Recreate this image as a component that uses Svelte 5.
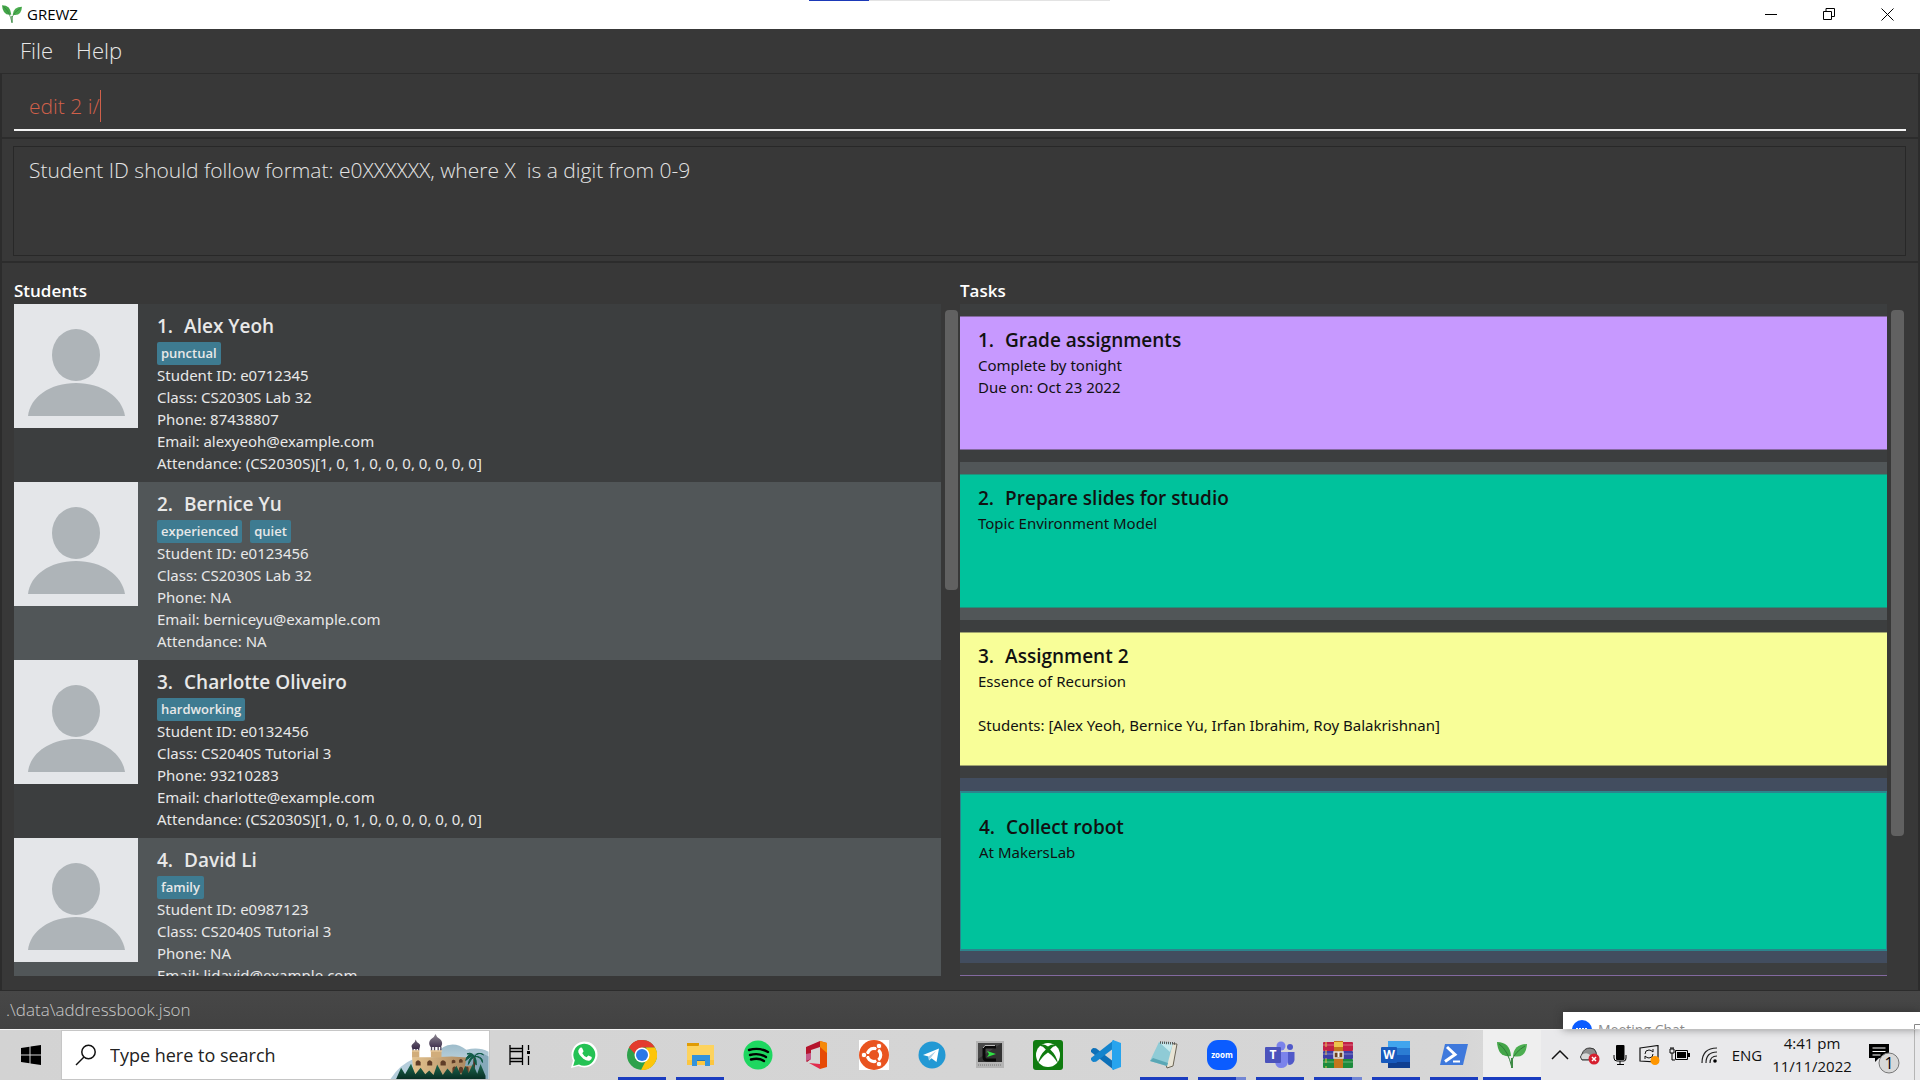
<script>
  const students = [
    { name: 'Alex Yeoh', tags: ['punctual'], lines: ['Student ID: e0712345', 'Class: CS2030S Lab 32', 'Phone: 87438807', 'Email: alexyeoh@example.com', 'Attendance: (CS2030S)[1, 0, 1, 0, 0, 0, 0, 0, 0, 0]'] },
    { name: 'Bernice Yu', tags: ['experienced', 'quiet'], lines: ['Student ID: e0123456', 'Class: CS2030S Lab 32', 'Phone: NA', 'Email: berniceyu@example.com', 'Attendance: NA'] },
    { name: 'Charlotte Oliveiro', tags: ['hardworking'], lines: ['Student ID: e0132456', 'Class: CS2040S Tutorial 3', 'Phone: 93210283', 'Email: charlotte@example.com', 'Attendance: (CS2030S)[1, 0, 1, 0, 0, 0, 0, 0, 0, 0]'] },
    { name: 'David Li', tags: ['family'], lines: ['Student ID: e0987123', 'Class: CS2040S Tutorial 3', 'Phone: NA', 'Email: lidavid@example.com'] }
  ];
  const tasks = [
    { name: 'Grade assignments', kind: 'deadline', lines: ['Complete by tonight', 'Due on: Oct 23 2022'] },
    { name: 'Prepare slides for studio', kind: 'todo', lines: ['Topic Environment Model'] },
    { name: 'Assignment 2', kind: 'assignment', lines: ['Essence of Recursion', '', 'Students: [Alex Yeoh, Bernice Yu, Irfan Ibrahim, Roy Balakrishnan]'] },
    { name: 'Collect robot', kind: 'todo', selected: true, lines: ['At MakersLab'] }
  ];
  const apps = [
    { id: 'WhatsApp' }, { id: 'Chrome', open: true }, { id: 'File Explorer', open: true }, { id: 'Spotify' },
    { id: 'Office' }, { id: 'Ubuntu' }, { id: 'Telegram' }, { id: 'Cmder' }, { id: 'Xbox' }, { id: 'VS Code' },
    { id: 'Notepad', open: true }, { id: 'Zoom', open: true, multi: true }, { id: 'Teams', open: true },
    { id: 'WinRAR', open: true, multi: true }, { id: 'Word', open: true }, { id: 'PowerShell', open: true },
    { id: 'GREWZ', open: true, active: true }
  ];
  let command = $state('edit 2 i/');
  const message = 'Student ID should follow format: e0XXXXXX, where X  is a digit from 0-9';
</script>

{#snippet plant()}
  <path d="M0 2q13 0 14 14q-13 2-14-14z" fill="#43a548" />
  <path d="M30 4q-13 0-14 12q13 3 14-12z" fill="#4cae50" />
  <path d="M2 4q9 6 13 24M28 6q-10 6-13 14" fill="none" stroke="#2f7d3a" stroke-width="1" />
  <path d="M15 18v10" stroke="#3f8c46" stroke-width="2" />
{/snippet}

<div class="screen">
  <div class="share-strip"><span></span></div>
  <header class="titlebar">
    <svg width="20" height="20" viewBox="0 0 30 30" aria-hidden="true">{@render plant()}</svg>
    <h1>GREWZ</h1>
    <div class="window-buttons">
      <button aria-label="Minimise"><svg width="12" height="12"><path d="M0 6.5h12" stroke="#000" /></svg></button>
      <button aria-label="Restore"><svg width="12" height="12"><path d="M.5 3.5h8v8h-8zM3 3V.5h8.500v8H9" fill="none" stroke="#000" /></svg></button>
      <button aria-label="Close"><svg width="13" height="13"><path d="M.5.5l12 12M12.500.5l-12 12" stroke="#000" /></svg></button>
    </div>
  </header>

  <nav class="menu"><button>File</button><button>Help</button></nav>

  <section class="command">
    <label class="field"><input aria-label="Command" bind:value={command} spellcheck="false" /><span class="caret"></span></label>
  </section>
  <section class="result">
    <textarea readonly aria-label="Result" spellcheck="false">{message}</textarea>
  </section>

  <main>
    <section class="panel">
      <h2>Students</h2>
      <div class="scroller">
        <ul>
          {#each students as s, i}
            <li class="student">
              <svg class="avatar" width="124" height="124" viewBox="0 0 124 124" aria-hidden="true">
                <rect width="124" height="124" fill="#e4e6e9" />
                <ellipse cx="62" cy="51" rx="24" ry="26" fill="#aeb4b8" />
                <path d="M14 112C16 93 36 79 62 79s46 14 49 33z" fill="#aeb4b8" />
              </svg>
              <div class="details">
                <h3><span>{i + 1}.</span>{s.name}</h3>
                <div class="tags">{#each s.tags as t}<span>{t}</span>{/each}</div>
                {#each s.lines as l}<p>{l}</p>{/each}
              </div>
            </li>
          {/each}
        </ul>
        <div class="track"><div class="thumb short"></div></div>
      </div>
    </section>
    <section class="panel">
      <h2>Tasks</h2>
      <div class="scroller">
        <ul>
          {#each tasks as t, i}
            <li class="task" class:selected={t.selected}>
              <div class="card {t.kind}">
                <h3><span>{i + 1}.</span>{t.name}</h3>
                {#each t.lines as l}<p>{l}</p>{/each}
              </div>
            </li>
          {/each}
          <li class="task"><div class="card deadline"></div></li>
        </ul>
        <div class="track"><div class="thumb tall"></div></div>
      </div>
    </section>
  </main>

  <footer class="status">.\data\addressbook.json
    <div class="chat">
      <svg width="20" height="20" viewBox="0 0 20 20" aria-hidden="true"><circle cx="10" cy="10" r="10" fill="#0b5cff" /><path d="M4 9h12" stroke="#fff" stroke-width="2" stroke-dasharray="2 1" /></svg>
      <span>Meeting Chat</span>
      <svg class="chat-min" width="12" height="10" aria-hidden="true"><path d="M0 9.500h12" stroke="#888" /></svg>
      <svg width="6" height="18" aria-hidden="true"><path d="M6 4.500H.5V18" fill="none" stroke="#888" /></svg>
    </div>
  </footer>

  <div class="taskbar">
    <button class="start" aria-label="Start"><svg width="20" height="20" viewBox="0 0 20 20"><path d="M0 3l8.500-1.200V9.500H0zM9.500 1.600L20 0v9.500H9.500zM0 10.500h8.500v7.700L0 17zM9.500 10.500H20V20L9.500 18.400z" /></svg></button>
    <div class="search">
      <svg width="22" height="22" viewBox="0 0 22 22" aria-hidden="true"><circle cx="13.500" cy="8" r="6.700" fill="none" stroke="#111" stroke-width="1.500" /><path d="M9 13L1 21" stroke="#111" stroke-width="1.500" /></svg>
      <input placeholder="Type here to search" aria-label="Type here to search" />
      <svg width="99" height="48" viewBox="33 33 296 145" aria-hidden="true">
        <defs>
          <linearGradient id="sand" x2="1"><stop stop-color="#e3c28e" /><stop offset="1" stop-color="#a5825c" /></linearGradient>
          <linearGradient id="dome" y2="1" x2="0"><stop stop-color="#8d8791" /><stop offset="1" stop-color="#3a2b4a" /></linearGradient>
          <linearGradient id="hill" y2="1" x2="0"><stop stop-color="#9dbccb" /><stop offset="1" stop-color="#dce9ef" /></linearGradient>
          <linearGradient id="tree" y2="1" x2="0"><stop stop-color="#1d6a50" /><stop offset="1" stop-color="#06281f" /></linearGradient>
        </defs>
        <path d="M160 110Q210 50 262 90Q300 80 329 96V178H160z" fill="url(#hill)" />
        <path d="M240 130Q290 82 329 110V178H240z" fill="#86a9ba" />
        <path d="M33 178Q60 134 106 116V178z" fill="#b5cddb" />
        <path d="M98 112h60l60-2 45 3-5 26 27-2v41H104z" fill="url(#sand)" />
        <path d="M98 91h22v22H98zM155 91h32v22h-32z" fill="#d1ad7b" />
        <path d="M98 91h22v4H98zM153 91h36v4h-36z" fill="#efd4a6" />
        <path d="M101 81v10M110 81v10M118 81v10M157 80v11M166 80v11M177 80v11M185 80v11" stroke="#554a61" stroke-width="4" />
        <path d="M109 59q2 9 10 12q7 5 0 16h-19q-7-9 0-15q8-4 9-13zM169 42q3 11 14 16q11 11 2 23h-31q-9-12 1-23q11-6 14-16z" fill="url(#dome)" />
        <path d="M109 137v-10q7-12 15 0v10zM144 137v-10q7-12 15 0v10zM184 137v-10q7-12 16 0v10zM218 131v-8q5-7 11 0v6zM240 129v-8q5-7 11 0v7zM220 161v-16q6-9 13 0v14zM240 160v-15q5-8 12 0v14zM259 159v-15q5-8 10 0v14z" fill="#5e3c27" />
        <path d="M284 156l3-44" stroke="#4d3424" stroke-width="6" />
        <path d="M286 110q-20-14-26 12q14-14 26-12q-16 2-18 24q9-17 18-24q-2 14 6 26q2-16-6-26q18-2 25 18q1-20-25-18q10-16 28-5q-12-11-28 5q-6-14-22-8q14 0 22 8z" fill="#0f5a46" stroke="#0f5a46" stroke-width="3" />
        <path d="M50 178l15-34 12 20 18-32 13 32 16-20 14 20 12-12 13 14 11-32 17 32 14-20 14 16 13-24 14 28 13-28 10 22 13-28 13 30 10-29 15 35v15z" fill="url(#tree)" />
      </svg>
    </div>
    <button class="tile view" aria-label="Task View"><svg width="22" height="20" viewBox="0 0 22 20"><path d="M1 0v3.500h12.500V0M1 20v-3.500h12.500V20M1 6.500h12.500v7H1zM1 3v14M13.500 3v14M19.500 0v5M19.500 11v9" fill="none" stroke="#000" stroke-width="1.300" /><path d="M18 6h3v3h-3z" /></svg></button>
    <div class="apps">
      {#each apps as a}
        <button class="tile" class:open={a.open} class:multi={a.multi} class:active={a.active} aria-label={a.id}>
          <svg width="30" height="30" viewBox="0 0 30 30">
            {#if a.id === 'WhatsApp'}
              <path d="M2 28l2-7.500A13 13 0 1 1 9.500 26z" fill="#fff" />
              <path d="M4.200 26l1.600-5.700A11 11 0 1 1 10 24.400z" fill="#24c254" />
              <path d="M10.500 8.500q1-1.500 2.500-.8l1.600 3.600-1.300 2q1.500 3 4.300 4l1.700-1.900 3.500 1.700q.4 2.400-2 3.400-2.600 1-6.500-1.700-4.200-3.300-5-6.500-.4-2.200 1.200-3.800z" fill="#fff" />
            {:else if a.id === 'Chrome'}
              <circle cx="15" cy="15" r="15" fill="#2da14b" />
              <path d="M2 7.500A15 15 0 0 1 28 7.500H15z" fill="#e33b2e" />
              <path d="M2 7.500A15 15 0 0 1 15 0v15H9z" fill="#e33b2e" />
              <path d="M28 7.500A15 15 0 0 1 14 30l7.500-14.500L19 7.500z" fill="#fdc50a" />
              <circle cx="15" cy="15" r="7.500" fill="#fff" /><circle cx="15" cy="15" r="6" fill="#2a78e8" />
            {:else if a.id === 'File Explorer'}
              <path d="M2 3h12v6H2z" fill="#e09b04" /><path d="M2 6h11l2-1h14v20H2z" fill="#fdd35e" /><path d="M2 20h27v5H2z" fill="#fcc63f" />
              <path d="M7 15h18v11h-5v-6h-8v6H7z" fill="#3393dc" /><path d="M12 20h8v1h-8z" fill="#2574b5" />
            {:else if a.id === 'Spotify'}
              <circle cx="15" cy="15" r="14.500" fill="#1ed760" />
              <path d="M6 10q10-3 19 2M7 15q9-2.500 16 2M8 19.500q8-2 13 1.500" fill="none" stroke="#000" stroke-width="2.400" stroke-linecap="round" />
            {:else if a.id === 'Office'}
              <path d="M19 1l7 2v24l-7 2z" fill="#e64a05" /><path d="M19 1l7 2v10l-7-6z" fill="#f58a0a" />
              <path d="M19 1v6L10 10v9l-4 3-1-1V7z" fill="#b5142c" /><path d="M5 14v7l5-2v-6z" fill="#c55a8a" /><path d="M8 23l11 1v5z" fill="#e22b4c" />
            {:else if a.id === 'Ubuntu'}
              <path d="M0 0h30v30H0z" fill="#fff" /><circle cx="15" cy="15" r="15" fill="#e95420" />
              <circle cx="15" cy="15" r="6.700" fill="none" stroke="#fff" stroke-width="3.200" />
              <path d="M15 15L4 15M15 15l6-10M15 15l6 10" stroke="#e95420" stroke-width="2" />
              <circle cx="15" cy="15" r="4" fill="#e95420" />
              <circle cx="5" cy="15" r="2.800" fill="#fff" stroke="#e95420" /><circle cx="20" cy="6" r="2.800" fill="#fff" stroke="#e95420" /><circle cx="20" cy="24" r="2.800" fill="#fff" stroke="#e95420" />
            {:else if a.id === 'Telegram'}
              <circle cx="15" cy="15" r="13.500" fill="#2399d4" /><path d="M6 15L22 8.500 19.500 22l-5-3.800-2.500 2.300-.5-4z" fill="#fff" /><path d="M11.500 16.500L19 11l-5 6.500-2 3z" fill="#a9cfe6" />
            {:else if a.id === 'Cmder'}
              <path d="M1 1h28v27H1z" fill="#b5b5b5" /><path d="M3 3h24v19H3z" fill="#333" /><path d="M3 3h24L3 19z" fill="#484848" />
              <path d="M21 7H11q-2 0-2 2v8q0 3 3 3h9" fill="none" stroke="#090909" stroke-width="3" /><path d="M20 5.500H10L8 8" fill="none" stroke="#bbb" />
              <path d="M12 11l9 3-9 3 2-3z" fill="#2fe343" /><path d="M3 25h24" stroke="#777" stroke-dasharray="1 1" />
            {:else if a.id === 'Xbox'}
              <rect width="30" height="30" rx="3" fill="#107c10" /><circle cx="15" cy="15" r="12" fill="#fff" />
              <path d="M7 5.800Q10 3 15 6.500q5-3.500 8-.7Q20 6 17.200 9.500q6.500 6 7.700 14Q21 16.500 15 12.500 9 16.500 5.100 23.500q1.200-8 7.700-14Q10 6 7 5.800z" fill="#107c10" />
            {:else if a.id === 'VS Code'}
              <path d="M0 10l2-2 3 .2L23 22v8L0 12z" fill="#0d70b8" /><path d="M0 20l2 2 3-.2L23 8V0L0 18z" fill="#1484cd" /><path d="M22 0l8 3v24l-8 3-1-1V1z" fill="#27a4ee" />
            {:else if a.id === 'Notepad'}
              <path d="M11 3l17 1-4 22-6 2z" fill="#e8e4d5" stroke="#6b6455" /><path d="M10 2l14 1-6 23L1 21z" fill="#8fcbd6" /><path d="M10 2l14 1-3 9z" fill="#c6e9ee" /><path d="M1 21l17 5 1-3L4 18z" fill="#5aa7b5" />
              <path d="M11 2.500l15 1" stroke="#555" stroke-width="2.500" stroke-dasharray="1 1" />
            {:else if a.id === 'Zoom'}
              <rect width="30" height="30" rx="11" fill="#0b5cff" /><text x="15" y="18" text-anchor="middle" class="zoom-word">zoom</text>
            {:else if a.id === 'Teams'}
              <circle cx="16" cy="6" r="4.500" fill="#7b83eb" /><circle cx="25" cy="7" r="3" fill="#5059c9" /><path d="M20 12h9.500v8q-1 5-6 5z" fill="#5059c9" /><path d="M10 12h13v10q-1 6-7 6-5 0-6-6z" fill="#7b83eb" />
              <rect y="7" width="16" height="16" rx="1" fill="#4b53bc" /><text x="8" y="19" text-anchor="middle" class="glyph">T</text>
            {:else if a.id === 'WinRAR'}
              <rect y="2" width="30" height="9" rx="1" fill="#c22146" /><rect y="11" width="30" height="8" rx="1" fill="#3d3fa6" /><rect y="19" width="30" height="9" rx="1" fill="#1d8b3c" />
              <path d="M0 5h30M0 14h30M0 22h30" stroke="#fff" stroke-opacity=".35" /><path d="M3 2v26" stroke="#e7c34a" stroke-dasharray="5 3" />
              <path d="M11 1h9v27h-9z" fill="#c4761c" /><path d="M11 2h9v5h-9z" fill="#ecc54c" /><path d="M11 12h9v6h-9z" fill="#6e421c" stroke="#ddd" stroke-width="1.500" /><path d="M15.500 12v5" stroke="#eee" stroke-width="2" />
            {:else if a.id === 'Word'}
              <path d="M7 1h22v7H7z" fill="#41a5ee" /><path d="M7 8h22v7H7z" fill="#2b7cd3" /><path d="M7 15h22v7H7z" fill="#185abd" /><path d="M7 22h22v6H7z" fill="#103f91" />
              <rect y="7" width="16" height="16" rx="1" fill="#185abd" /><text x="8" y="19" text-anchor="middle" class="glyph">W</text>
            {:else if a.id === 'PowerShell'}
              <path d="M6 4h23l-5 21H1z" fill="#3f79dc" /><path d="M8 7l8 7.500-10 7" fill="none" stroke="#fff" stroke-width="3" /><path d="M14 21.500h7" stroke="#fff" stroke-width="2" />
            {:else}
              {@render plant()}
            {/if}
          </svg>
        </button>
      {/each}
    </div>
    <div class="tray">
      <button aria-label="Show hidden icons"><svg width="18" height="20" viewBox="0 0 18 20"><path d="M1 14l8-8 8 8" fill="none" stroke="#111" stroke-width="1.500" /></svg></button>
      <button aria-label="OneDrive"><svg width="22" height="20" viewBox="0 0 22 20"><path d="M3 15q-3-3 0-6 2-6 8-6 5 0 6 4l1 7-9 1z" fill="#8d8d8d" stroke="#333" /><path d="M3 14q-2-3 1-5 4-2 7 1l4 4z" fill="#d8d8d8" /><circle cx="15" cy="14" r="5.500" fill="#d6202f" /><path d="M13 12l4 4M17 12l-4 4" stroke="#fff" stroke-width="1.500" /></svg></button>
      <button aria-label="Microphone"><svg width="14" height="20" viewBox="0 0 14 20"><rect x="3" width="8.500" height="15" rx="1" /><path d="M1 10v3q0 3 3 3h7q2 0 2-3v-3M7 16v3.500M4 19.500h7" fill="none" stroke="#000" /></svg></button>
      <button aria-label="Updates"><svg width="22" height="20" viewBox="0 0 22 20"><path d="M1 3l18-2.500V17L1 16z" fill="none" stroke="#111" stroke-width="1.200" /><path d="M6 9q0-4 4-4 2 0 4 2V4M14 9q0 4-4 4-2 0-4-2v3" fill="none" stroke="#111" /><circle cx="16" cy="15.500" r="4.500" fill="#ff9600" /></svg></button>
      <button aria-label="Battery"><svg width="22" height="16" viewBox="0 0 22 16"><path d="M1 2h4v4H1zM2 0v2M4 0v2M3 6v7h3" fill="none" stroke="#000" /><path d="M6.500 3.500h12v9h-12z" fill="none" stroke="#000" /><path d="M8 5h9v6H8zM19 6h2v4h-2z" /></svg></button>
      <button aria-label="Wi-Fi"><svg width="18" height="18" viewBox="0 0 18 18"><circle cx="14" cy="15" r="1.800" /><path d="M9 17q0-7 7-7M5 17Q5 6 16 6M1 17Q1 2 16 2" fill="none" stroke="#222" stroke-width="1.200" /></svg></button>
      <button class="lang">ENG</button>
      <button class="clock"><span>4:41 pm</span><span>11/11/2022</span></button>
      <button class="note" aria-label="Notifications"><svg width="32" height="32" viewBox="0 0 32 32"><path d="M0 1h20v14H10l-4 4v-4H0z" /><path d="M3.500 5h13M3.500 8.500h13M3.500 12h8" stroke="#fff" /><circle cx="20" cy="20" r="10" fill="#d8d8d8" stroke="#777" /><text x="20" y="26" text-anchor="middle">1</text></svg></button>
    </div>
  </div>
</div>

<style>
  :global(body) { margin: 0; overflow: hidden; }
  * { box-sizing: border-box; }
  h1, h2, h3, p, ul { margin: 0; padding: 0; font-weight: 400; list-style: none; }
  button, input, textarea { font: inherit; color: inherit; background: none; border: 0; padding: 0; margin: 0; outline: 0; }
  svg { display: block; flex: none; }
  .screen { position: relative; display: flex; flex-direction: column; height: 100vh; background: #383838; color: #e8e8e8; font-family: "Open Sans", "Noto Sans", sans-serif; }
  .share-strip { position: absolute; top: 0; left: 42.13%; width: 301px; height: 1px; background: #e3e3e3; }
  .share-strip span { display: block; width: 60px; height: 1px; background: #1b39b8; }

  .titlebar { flex: none; display: flex; align-items: center; height: 29px; padding: 0 4px 1px 2px; gap: 5px; background: #fff; color: #000; }
  h1 { font-size: 15px; }
  .window-buttons { display: flex; margin-left: auto; }
  .window-buttons button { width: 58px; height: 28px; display: grid; place-items: center; }

  .menu { flex: none; display: flex; height: 44px; gap: 23px; padding: 0 20px 2px; font-size: 22px; font-weight: 300; }
  .command, .result { flex: none; border: 2px solid #2c2c2c; border-top-width: 1px; }
  .command { height: 65px; padding: 8px 12px 7px; border-bottom-width: 1px; }
  .field { display: flex; align-items: center; height: 49px; padding-left: 15px; border-bottom: 2px solid #f4f4f4; color: #d0604a; font-size: 21px; font-weight: 300; }
  .field input { field-sizing: content; height: 32px; }
  .caret { width: 1px; height: 32px; background: #d0604a; }
  .result { height: 125px; padding: 7px 12px 7px 11px; }
  .result textarea { display: block; width: 100%; height: 110px; padding: 8px 15px; resize: none; border: 1px solid #282828; font-size: 21px; line-height: 30px; font-weight: 300; color: #e4e4e4; }

  main { flex: 1; min-height: 0; display: flex; padding: 15px 12px 14px; border: 2px solid #2c2c2c; border-top: 0; border-bottom-width: 1px; }
  .panel { flex: 1; min-width: 0; display: flex; flex-direction: column; }
  h2 { flex: none; height: 26px; line-height: 26px; font-size: 17px; font-weight: 600; color: #fff; }
  .scroller { flex: 1; min-height: 0; display: flex; }
  ul { flex: 1; min-width: 0; overflow: hidden; background: #3c3e3f; }
  .track { flex: none; width: 19px; padding: 6px 2px 0 4px; }
  .thumb { border-radius: 4px; background: #616161; }
  .short { height: 42%; }
  .tall { height: 79%; }
  li:nth-child(even) { background: #515658; }
  h3 { font-size: 19px; line-height: 27px; font-weight: 600; }
  h3 span { margin-right: 11px; }
  p { font-family: "Noto Sans", "Open Sans", sans-serif; font-size: 15px; line-height: 22px; min-height: 22px; }

  .student { display: flex; height: 178px; gap: 19px; }
  .details { padding-top: 9px; }
  .tags { display: flex; gap: 8px; height: 24px; padding-top: 2px; }
  .tags span { height: 23px; padding: 0 4px; border-radius: 2px; background: #3e7b91; font-size: 13px; line-height: 23px; font-weight: 600; }

  .task { height: 158px; padding: 12px 0; }
  .card { height: 100%; padding: 10px 18px; border: 1px solid transparent; border-width: 1px 0; color: #111; }
  .deadline { background: #c799ff; border-color: #83699f; }
  .todo { background: #00c29c; border-color: #22907b; }
  .assignment { background: #f8fe98; border-color: #a0a470; }
  li.selected { height: 185px; padding-top: 13px; background: #424d5f; }
  .selected .card { padding: 21px 18px; border: 2px solid #2c848d; border-width: 2px 1px; }

  .status { position: relative; flex: none; height: 38px; padding-left: 6px; line-height: 38px; background: linear-gradient(#474747, #424242); color: #c8c8c8; font-size: 17px; font-weight: 300; }
  .chat { position: absolute; right: 0; bottom: 0; width: 357px; height: 17px; overflow: hidden; display: flex; padding: 8px 0 0 9px; gap: 6px; background: #fff; color: #8a8a8a; font-size: 14px; line-height: 20px; font-weight: 400; box-shadow: 0 0 8px #2228; }
  .chat-min { margin-left: auto; margin-right: 40px; }

  .taskbar { flex: none; display: flex; height: 51px; background: linear-gradient(90deg, #d3d3d3, #d6d6d6 76%, #dcdcdc 80%); border-top: 1px solid #f4f4f4; color: #111; }
  .taskbar button { flex: none; display: grid; place-items: center; }
  .start { width: 61px; }
  .search { flex: none; display: flex; align-items: center; width: 429px; padding-left: 13px; border: 1px solid #c6c6c6; background: #fff; }
  .search input { flex: 1; min-width: 0; margin-left: 13px; font-size: 18px; }
  .search input::placeholder { color: #222; opacity: 1; }
  .view { margin: 0 6px 0 1px; }
  .taskbar .tile { position: relative; width: 58px; height: 50px; }
  .apps { display: flex; flex: none; }
  .open::after { content: ''; position: absolute; left: 5px; right: 5px; bottom: 0; height: 3px; background: #1b3dc0; }
  .multi::after { background: linear-gradient(90deg, #1b3dc0 79%, #7286d4 79%); }
  .active { background: #efefef; }
  .active::after { left: 0; right: 0; }
  .zoom-word { font-size: 8px; font-weight: 700; fill: #fff; }
  .glyph { font-size: 12px; font-weight: 700; fill: #fff; }
  .tray { flex: 1; display: flex; align-items: center; padding-left: 4px; background: #e9e9eb; }
  .tray button { width: 30px; height: 50px; }
  .tray .lang { width: 44px; font-size: 15px; }
  .tray .clock { flex: 1; align-content: center; font-size: 15px; line-height: 23px; }
  .tray .note { width: 60px; margin-right: 5px; padding-top: 8px; border-right: 1px solid #b5b5b5; }
  .note text { font-size: 16px; }
</style>
